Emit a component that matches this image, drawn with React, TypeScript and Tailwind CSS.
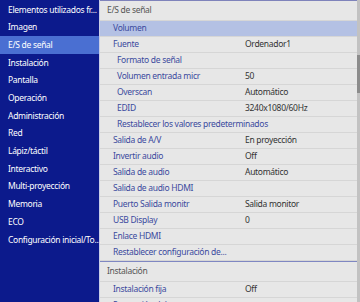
const sidebar = [
  "Elementos utilizados fr...",
  "Imagen",
  "E/S de señal",
  "Instalación",
  "Pantalla",
  "Operación",
  "Administración",
  "Red",
  "Lápiz/táctil",
  "Interactivo",
  "Multi-proyección",
  "Memoria",
  "ECO",
  "Configuración inicial/To...",
];

type Row = { label: string; value?: string; level: 1 | 2; active?: boolean };

const signalRows: Row[] = [
  { label: "Volumen", level: 1, active: true },
  { label: "Fuente", value: "Ordenador1", level: 1 },
  { label: "Formato de señal", level: 2 },
  { label: "Volumen entrada micr", value: "50", level: 2 },
  { label: "Overscan", value: "Automático", level: 2 },
  { label: "EDID", value: "3240x1080/60Hz", level: 2 },
  { label: "Restablecer los valores predeterminados", level: 2 },
  { label: "Salida de A/V", value: "En proyección", level: 1 },
  { label: "Invertir audio", value: "Off", level: 1 },
  { label: "Salida de audio", value: "Automático", level: 1 },
  { label: "Salida de audio HDMI", level: 1 },
  { label: "Puerto Salida monitr", value: "Salida monitor", level: 1 },
  { label: "USB Display", value: "0", level: 1 },
  { label: "Enlace HDMI", level: 1 },
  { label: "Restablecer configuración de...", level: 1 },
];

const installRows: Row[] = [
  { label: "Instalación fija", value: "Off", level: 1 },
  { label: "Proyección delantera", level: 1 },
];

function MenuRow({ row }: { row: Row }) {
  return (
    <div
      className={`flex h-[16px] shrink-0 items-center border-b border-[#d6d6d6] ${
        row.active ? "bg-[#b4c1e4]" : ""
      }`}
    >
      <span
        className={`w-[145px] shrink-0 whitespace-nowrap text-[#3b4a9e] ${
          row.level === 2 ? "pl-[17px]" : "pl-[13px]"
        }`}
      >
        {row.label}
      </span>
      {row.value && <span className="whitespace-nowrap text-[#333]">{row.value}</span>}
    </div>
  );
}

function Header({ title }: { title: string }) {
  return (
    <div className="flex h-[20px] shrink-0 items-center border-b border-[#d6d6d6] pl-[7px] text-[#555]">
      {title}
    </div>
  );
}

export default function App() {
  return (
    <div
      className="flex h-[302px] w-[360px] overflow-hidden bg-[#e7e7e7] text-[8.5px] leading-none tracking-[-0.3px]"
      style={{ fontFamily: '"Noto Sans", "Open Sans", sans-serif' }}
    >
      <div className="flex w-[99px] shrink-0 flex-col bg-[#0c1a8c] pt-[1px] text-white">
        {sidebar.map((s) => (
          <div
            key={s}
            className={`flex h-[17.7px] shrink-0 items-center whitespace-nowrap pl-[8px] ${
              s === "E/S de señal" ? "bg-[#4a6fd2]" : ""
            }`}
          >
            {s}
          </div>
        ))}
      </div>
      <div className="w-[1px] shrink-0 bg-[#c8cde6]" />
      <div className="flex min-w-0 flex-1 flex-col border-t border-[#7f83bb]">
        <Header title="E/S de señal" />
        {signalRows.map((r) => (
          <MenuRow key={r.label} row={r} />
        ))}
        <div className="h-[1px] shrink-0 bg-[#7f87c2]" />
        <Header title="Instalación" />
        {installRows.map((r) => (
          <MenuRow key={r.label} row={r} />
        ))}
      </div>
      <div className="flex w-[3px] shrink-0 flex-col bg-[#c2c2c2] pt-[55px]">
        <div className="h-[38px] bg-[#8c8c8c]" />
      </div>
    </div>
  );
}
